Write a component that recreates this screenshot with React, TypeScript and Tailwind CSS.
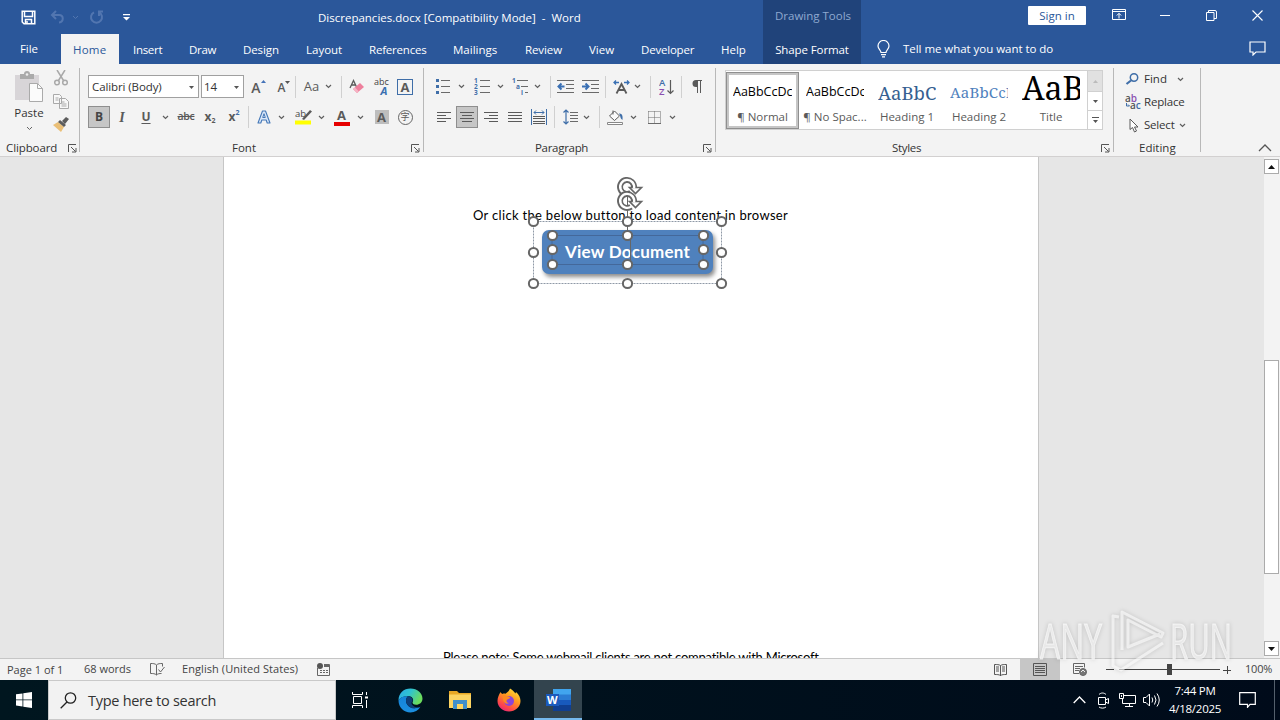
import type { ReactNode } from 'react';

interface BoxProps {
  className: string;
  children?: ReactNode;
}

const tabs = [
  { name: 'File', cell: 'w-[61px] pl-[20px] pb-[2px]', text: 'tracking-[-0.1px]' },
  { name: 'Home', cell: 'w-[58px] pl-[12px] bg-[#f3f3f3] text-[#2b579a]', text: 'tracking-[0.2px]' },
  { name: 'Insert', cell: 'w-[56px] pl-[14px]', text: 'tracking-[-0.3px]' },
  { name: 'Draw', cell: 'w-[54px] pl-[14px]', text: 'tracking-[-0.3px]' },
  { name: 'Design', cell: 'w-[64px] pl-[14px]', text: 'tracking-[-0.1px]' },
  { name: 'Layout', cell: 'w-[62px] pl-[13px]', text: 'tracking-normal' },
  { name: 'References', cell: 'w-[85px] pl-[14px]', text: 'tracking-[-0.2px]' },
  { name: 'Mailings', cell: 'w-[71px] pl-[13px]', text: 'tracking-normal' },
  { name: 'Review', cell: 'w-[65px] pl-[14px]', text: 'tracking-[-0.1px]' },
  { name: 'View', cell: 'w-[51px] pl-[13px]', text: 'tracking-normal' },
  { name: 'Developer', cell: 'w-[80px] pl-[14px]', text: 'tracking-[-0.2px]' },
  { name: 'Help', cell: 'w-[56px] pl-[14px]', text: 'tracking-normal' },
];

const styles = [
  { name: '¶ Normal', sample: 'AaBbCcDc', look: 'text-[12.5px] text-black' },
  { name: '¶ No Spac...', sample: 'AaBbCcDc', look: 'text-[12.5px] text-black' },
  { name: 'Heading 1', sample: 'AaBbC', look: "font-['Noto_Serif','DejaVu_Serif',serif] text-[18.5px] text-[#365f91]" },
  { name: 'Heading 2', sample: 'AaBbCcI', look: "font-['Noto_Serif','DejaVu_Serif',serif] text-[15px] text-[#4f81bd] tracking-[0.2px]" },
  { name: 'Title', sample: 'AaB', look: "font-['Noto_Serif','DejaVu_Serif',serif] text-[32px] text-black" },
];

function Cell({ className, children }: BoxProps) {
  return <div className={`flex h-full shrink-0 items-center justify-center whitespace-nowrap ${className}`}>{children}</div>;
}

function Chevron({ className }: BoxProps) {
  return (
    <Cell className={className}>
      <svg width="7" height="5" viewBox="0 0 7 5" fill="none" stroke="#5f5f5f" strokeWidth="1.2" className="shrink-0">
        <path d="M1 1l2.5 2.5L6 1" />
      </svg>
    </Cell>
  );
}

function Divider() {
  return <div className="h-[22px] w-px shrink-0 bg-[#d0d0d0]" />;
}

function GroupLabel({ className, children }: BoxProps) {
  return <div className={`flex h-4 shrink-0 items-center whitespace-nowrap text-[11.5px] text-[#333] ${className}`}>{children}</div>;
}

function Launcher() {
  return (
    <svg width="9" height="9" viewBox="0 0 9 9" fill="none" stroke="#555" className="mt-px shrink-0">
      <path d="M.5 8V.5H8M3 3l4.5 4.5M8 4v4H4" />
    </svg>
  );
}

function Lines({ rows }: { rows: [number, number][] }) {
  return (
    <svg width="16" height="16" viewBox="0 0 16 16" stroke="#5a5a5a">
      {rows.map(([from, to], i) => (
        <path key={i} d={`M${from} ${3.5 + i * 3}H${to}`} />
      ))}
    </svg>
  );
}

function Header() {
  return (
    <header className="bg-[#2b579a] text-[11.5px] text-white">
      <div className="flex h-[34px] items-center">
        <Cell className="w-[39px] pl-[18px]">
          <svg width="15" height="15" viewBox="0 0 15 15" fill="none" stroke="white" strokeWidth="1.5">
            <path d="M1.2 1.2h12.6v12.6H3L1.2 12zM3.5 1.5v5h8v-5M4.5 13.5v-4h6v4" />
            <path d="M6 11v3" />
          </svg>
        </Cell>
        <Cell className="w-[36px]">
          <svg width="15" height="14" viewBox="0 0 15 14" fill="none" stroke="#5276b0" strokeWidth="2">
            <path d="M6 1L2 5l4 4M2 5h7c5 0 5 7 0 7.5" />
          </svg>
        </Cell>
        <Cell className="-ml-[6px] w-3">
          <svg width="7" height="5" viewBox="0 0 7 5" fill="none" stroke="#5276b0">
            <path d="M1 1l2.5 2.5L6 1" />
          </svg>
        </Cell>
        <Cell className="w-[30px]">
          <svg width="15" height="15" viewBox="0 0 15 15" fill="none" stroke="#5276b0" strokeWidth="2">
            <path d="M5 2.3a5.5 5.5 0 1 0 5 0M10 6V1.5h4" />
          </svg>
        </Cell>
        <Cell className="w-[30px]">
          <svg width="7" height="7" viewBox="0 0 7 7" fill="white">
            <path d="M0 0h7v1.2H0zM0 3h7L3.5 6.5z" />
          </svg>
        </Cell>
        <div className="flex h-full w-[622px] items-center pl-[177px] pt-px">
          <span className="whitespace-pre">Discrepancies.docx [Compatibility Mode]  -  Word</span>
        </div>
        <div className="flex h-full w-[98px] items-center justify-center bg-[#20437a] pb-[2px] pl-[2px] text-[#8fa9d0]">Drawing Tools</div>
        <div className="mb-[3px] ml-[167px] flex h-[19px] w-[58px] items-center justify-center rounded-[1px] bg-white pt-px text-[#2b579a]">Sign in</div>
        <Cell className="w-[66px] pb-1">
          <svg width="14" height="12" viewBox="0 0 14 12" fill="none" stroke="white">
            <path d="M.5.5h13v10H.5zM.5 2.5h13M7 9.5v-5M4.8 6.5L7 4.3l2.2 2.2" />
          </svg>
        </Cell>
        <Cell className="w-[26px] pb-1">
          <div className="h-px w-[10px] bg-white" />
        </Cell>
        <Cell className="w-[67px] pb-1">
          <svg width="11" height="11" viewBox="0 0 11 11" fill="none" stroke="white">
            <path d="M.5 2.5h7.5v8H.5zM2.5 2.5v-2h6.5q1.5 0 1.5 1.5v6.500H8" />
          </svg>
        </Cell>
        <Cell className="w-[25px] pb-1">
          <svg width="11" height="11" viewBox="0 0 11 11" stroke="white" strokeWidth="1.1">
            <path d="M.5.5l10 10M10.5.5l-10 10" />
          </svg>
        </Cell>
      </div>
      <div className="flex h-[30px] items-center">
        {tabs.map((tab) => (
          <div key={tab.name} className={`flex h-full shrink-0 items-center whitespace-nowrap pt-px ${tab.cell}`}>
            <span className={tab.text}>{tab.name}</span>
          </div>
        ))}
        <div className="flex h-full w-[98px] items-center justify-center whitespace-nowrap bg-[#20437a] pt-px tracking-[-0.1px]">Shape Format</div>
        <Cell className="w-[42px] pl-[3px]">
          <svg width="13" height="18" viewBox="0 0 13 18" fill="none" stroke="white" strokeWidth="1.2">
            <path d="M4 12.500c0-2-3-3.500-3-6.500a5.500 5.500 0 0 1 11 0c0 3-3 4.500-3 6.500zM4 14.700h5M5 16.800h3" />
          </svg>
        </Cell>
        <span className="w-[346px] whitespace-nowrap tracking-[-0.04px]">Tell me what you want to do</span>
        <svg width="17" height="15" viewBox="0 0 17 15" fill="none" stroke="white" strokeWidth="1.2" className="mb-px">
          <path d="M1 1h15v10H7l-3 3v-3H1z" />
        </svg>
      </div>
    </header>
  );
}

function ClipboardGroup() {
  return (
    <div className="mt-1 flex h-[84px] w-[80px] flex-col border-r border-[#b8b8b8]">
      <div className="flex h-[72px] shrink-0">
        <div className="flex w-[49px] flex-col items-center pl-[9px] pt-[3px] text-[11.5px] text-[#333]">
          <svg width="30" height="32" viewBox="0 0 30 32" className="shrink-0">
            <path d="M1 4h24v25H1z" fill="#d8d5d8" />
            <path d="M6 3h4a3 3 0 0 1 6 0h4v5H6z" fill="#aaa" />
            <circle cx="13" cy="3.5" r="1.3" fill="#eee" />
            <path d="M15.500 12.500h8l5 5v13h-13z" fill="#fbfbfb" stroke="#aaa" />
            <path d="M23.500 12.500v5h5" fill="none" stroke="#aaa" />
          </svg>
          <span className="mt-[2px] leading-[16px]">Paste</span>
          <svg width="7" height="5" viewBox="0 0 7 5" fill="none" stroke="#666" className="mt-[5px] shrink-0">
            <path d="M1 1l2.5 2.5L6 1" />
          </svg>
        </div>
        <div className="flex w-6 flex-col items-center pt-[2px]">
          <svg width="16" height="16" viewBox="0 0 16 16" fill="none" stroke="#a9a9a9" strokeWidth="1.5" className="shrink-0">
            <path d="M4 0l6.500 10.500M12 0L5.500 10.500" />
            <circle cx="4" cy="12.5" r="2.3" />
            <circle cx="12" cy="12.5" r="2.3" />
          </svg>
          <svg width="16" height="15" viewBox="0 0 16 15" fill="#f8f8f8" stroke="#a9a9a9" className="mt-[8px] shrink-0">
            <path d="M.5.5h6l2 2v7h-8zM6.500 4.500h6l3 3v7h-9z" />
            <path d="M2.500 4h3M2.500 6h3M8.500 8h3M8.500 10h5M8.500 12h5" />
          </svg>
          <svg width="16" height="15" viewBox="0 0 16 15" className="mt-[8px] shrink-0">
            <path d="M0 8l5-3 6 5-3 5z" fill="#eabf77" />
            <path d="M5 5l2-2 6 5-2 2zM9 4l4-4 3 2-4 5z" fill="#5c5c5c" />
          </svg>
        </div>
      </div>
      <GroupLabel className="justify-between pl-[6px] pr-[2px]">
        <span className="tracking-[-0.1px]">Clipboard</span>
        <Launcher />
      </GroupLabel>
    </div>
  );
}

function FontGroup() {
  return (
    <div className="mt-1 flex h-[84px] w-[344px] flex-col border-r border-[#b8b8b8] text-[#5a5a5a]">
      <div className="mt-[7px] flex h-[23px] shrink-0 items-center pl-2">
        <div className="flex h-full w-[111px] items-center justify-between border border-[#a0a0a0] bg-white pl-[3px] pr-1 pt-px text-[11.5px] text-[#333]">
          <span className="tracking-[-0.1px]">Calibri (Body)</span>
          <svg width="5" height="3" viewBox="0 0 5 3" fill="#555"><path d="M0 0h5L2.5 3z" /></svg>
        </div>
        <div className="ml-[2px] flex h-full w-[43px] items-center justify-between border border-[#a0a0a0] bg-white pl-[2px] pr-1 pt-px text-[11.5px] text-[#333]">
          <span>14</span>
          <svg width="5" height="3" viewBox="0 0 5 3" fill="#555"><path d="M0 0h5L2.5 3z" /></svg>
        </div>
        <Cell className="w-[29px] pt-px text-[14px] font-semibold">
          A<svg width="5" height="3" viewBox="0 0 5 3" fill="#4472b8" className="mb-[11px]"><path d="M0 3h5L2.5 0z" /></svg>
        </Cell>
        <Cell className="w-[22px] pt-[3px] text-[12px] font-semibold">
          A<svg width="5" height="3" viewBox="0 0 5 3" fill="#555" className="mb-[12px]"><path d="M0 0h5L2.5 3z" /></svg>
        </Cell>
        <Divider />
        <Cell className="w-[29px] pl-[2px] text-[13px]">Aa</Cell>
        <Chevron className="w-[6px]" />
        <div className="w-[10px]" />
        <Divider />
        <Cell className="w-[29px]">
          <svg width="15" height="15" viewBox="0 0 15 15">
            <path d="M1 9L4.5 1.5 8 9M2.3 6h4.5" fill="none" stroke="#5a5a5a" strokeWidth="1.3" />
            <path d="M4 10l7-6 4 4-7 6z" fill="#ee7f9c" />
            <path d="M4 10l2-1.5 4 4L8 14z" fill="#f6b3c4" />
          </svg>
        </Cell>
        <Cell className="w-[21px] flex-col">
          <span className="h-[7px] text-[9px] leading-[6px] text-[#444]">abc</span>
          <span className="h-[9px] pl-[5px] text-[11px] font-bold italic leading-[9px] text-[#3a6fb0]">A</span>
        </Cell>
        <Cell className="w-[26px]">
          <span className="h-4 w-4 border border-[#3f6ea8] text-center text-[13px] font-bold leading-[14px]">A</span>
        </Cell>
      </div>
      <div className="mt-2 flex h-[22px] shrink-0 items-center pl-2">
        <Cell className="w-[22px] border border-[#8e8e8e] bg-[#c6c6c6] text-[12px] font-bold text-[#444]">B</Cell>
        <Cell className="w-6 font-['Liberation_Serif',serif] text-[14px] font-bold italic">I</Cell>
        <Cell className="w-6 text-[12px] font-bold underline underline-offset-2">U</Cell>
        <Chevron className="w-[14px]" />
        <Cell className="w-[28px] text-[10.5px] font-semibold tracking-[-0.3px] line-through">abc</Cell>
        <Cell className="w-[20px] text-[12px] font-bold">x<span className="pt-2 text-[7px]">2</span></Cell>
        <Cell className="w-[28px] text-[12px] font-bold">x<span className="pb-2 text-[7px] text-[#3f6ea8]">2</span></Cell>
        <Divider />
        <Cell className="w-[30px]">
          <svg width="14" height="14" viewBox="0 0 14 14" fill="none" stroke="#4478b8" strokeLinejoin="round">
            <path d="M1 13L5.5 1h3L13 13h-2.8l-1-3H4.8l-1 3z" strokeWidth="1.1" fill="#dce8f8" />
            <path d="M5.7 7.5h2.6L7 3.7z" fill="#f3f3f3" />
          </svg>
        </Cell>
        <Chevron className="w-[4px]" />
        <Cell className="w-[36px] pl-1">
          <svg width="17" height="16" viewBox="0 0 17 16">
            <text x="0" y="8" fontSize="9.5" fontFamily="Open Sans, sans-serif" fill="#444">ab</text>
            <path d="M7 10l8-9 2 1.5-8 8.5z" fill="#5a5a5a" />
            <path d="M0 11.500h16v4H0z" fill="#ffff00" />
          </svg>
        </Cell>
        <Chevron className="w-[4px]" />
        <Cell className="w-[35px] flex-col pl-[2px]">
          <span className="text-[13px] font-bold leading-[13px]">A</span>
          <span className="h-1 w-4 bg-[#e60000]" />
        </Cell>
        <Chevron className="w-[4px]" />
        <Cell className="ml-[4px] w-[31px]">
          <span className="h-[14px] w-[14px] bg-[#bdbdbd] text-center text-[13px] font-bold leading-[14px]">A</span>
        </Cell>
        <Cell className="w-4">
          <span className="flex h-[15px] w-[15px] shrink-0 items-center justify-center rounded-full border border-[#666] font-['Noto_Sans_CJK_SC',sans-serif] text-[9px]">字</span>
        </Cell>
      </div>
      <GroupLabel className="mt-3 justify-between pl-[152px] pr-[3px]">
        <span>Font</span>
        <Launcher />
      </GroupLabel>
    </div>
  );
}

function ParagraphGroup() {
  return (
    <div className="mt-1 flex h-[84px] w-[292px] flex-col border-r border-[#b8b8b8] text-[#5a5a5a]">
      <div className="mt-[7px] flex h-[23px] shrink-0 items-center pl-[10px]">
        <Cell className="w-[18px]">
          <svg width="14" height="15" viewBox="0 0 14 15">
            <path d="M0 0h3v3H0zM0 6h3v3H0zM0 12h3v3H0z" fill="#3f6ea8" />
            <path d="M5 1.500h9M5 7.500h9M5 13.500h9" stroke="#6a6a6a" />
          </svg>
        </Cell>
        <Chevron className="w-[18px]" />
        <Cell className="w-[23px]">
          <svg width="16" height="17" viewBox="0 0 16 17">
            <g fontSize="6.5" fontWeight="700" fontFamily="Open Sans, sans-serif" fill="#3f6ea8">
              <text x="0" y="5">1</text>
              <text x="0" y="11">2</text>
              <text x="0" y="17">3</text>
            </g>
            <path d="M6 2.500h10M6 8.500h10M6 14.500h10" stroke="#6a6a6a" />
          </svg>
        </Cell>
        <Chevron className="w-[15px]" />
        <Cell className="w-[25px]">
          <svg width="17" height="17" viewBox="0 0 17 17">
            <g fontSize="6.5" fontWeight="700" fontFamily="Open Sans, sans-serif" fill="#3f6ea8">
              <text x="0" y="5">1</text>
              <text x="4" y="11">a</text>
              <text x="9" y="17">i</text>
            </g>
            <path d="M5 2.500h11M9 8.500h7M13 14.500h3" stroke="#6a6a6a" />
          </svg>
        </Cell>
        <Chevron className="w-[8px]" />
        <div className="w-[9px]" />
        <Divider />
        <Cell className="w-[29px]">
          <svg width="17" height="14" viewBox="0 0 17 14">
            <path d="M0 .5h17M9 4.500h8M9 8.500h8M0 12.500h17" stroke="#6a6a6a" />
            <path d="M7.500 6.500H2M4.500 3.500l-3 3 3 3" stroke="#3a70b4" strokeWidth="2" fill="none" />
          </svg>
        </Cell>
        <Cell className="w-[20px]">
          <svg width="17" height="14" viewBox="0 0 17 14">
            <path d="M0 .5h17M9 4.500h8M9 8.500h8M0 12.500h17" stroke="#6a6a6a" />
            <path d="M0 6.500h5.500M3.500 3.500l3 3-3 3" stroke="#3a70b4" strokeWidth="2" fill="none" />
          </svg>
        </Cell>
        <div className="w-[5px]" />
        <Divider />
        <Cell className="w-[30px]">
          <svg width="17" height="14" viewBox="0 0 17 14" fill="none">
            <path d="M6 2.500H1M3 .5l-2 2 2 2M11 2.500h5M14 .5l2 2-2 2" stroke="#3a70b4" strokeWidth="1.3" />
            <path d="M3.500 13.500L8.500 4l5 9.500M5.500 10h6" stroke="#5a5a5a" strokeWidth="1.8" />
          </svg>
        </Cell>
        <Chevron className="w-[3px]" />
        <div className="w-[11px]" />
        <Divider />
        <Cell className="w-[30px]">
          <svg width="15" height="16" viewBox="0 0 15 16">
            <g fontSize="9.5" fontWeight="600" fontFamily="Open Sans, sans-serif">
              <text x="0" y="7" fill="#3f6ea8">A</text>
              <text x="0" y="16" fill="#8a4fb0">Z</text>
            </g>
            <path d="M11.500 1v13M8.500 11.500l3 3 3-3" stroke="#5a5a5a" strokeWidth="1.2" fill="none" />
          </svg>
        </Cell>
        <Divider />
        <Cell className="w-[30px]">
          <svg width="10" height="13" viewBox="0 0 10 13" fill="#5a5a5a">
            <path d="M4 0h6v1H9v12H8V1H6v12H5V7H4a3.500 3.500 0 0 1 0-7z" />
          </svg>
        </Cell>
      </div>
      <div className="mt-2 flex h-[22px] shrink-0 items-center pl-[7px]">
        <Cell className="w-[25px]"><Lines rows={[[1, 15], [1, 10], [1, 15], [1, 10]]} /></Cell>
        <Cell className="w-[22px] border border-[#8e8e8e] bg-[#c6c6c6]"><Lines rows={[[1, 15], [3, 13], [1, 15], [3, 13]]} /></Cell>
        <Cell className="w-[26px]"><Lines rows={[[1, 15], [6, 15], [1, 15], [6, 15]]} /></Cell>
        <Cell className="w-[22px]"><Lines rows={[[1, 15], [1, 15], [1, 15], [1, 15]]} /></Cell>
        <Cell className="w-[26px]">
          <svg width="16" height="16" viewBox="0 0 16 16" fill="none">
            <path d="M.5 0v16M15.500 0v16M3 3.500h10M5 1.500l-2 2 2 2M11 1.500l2 2-2 2" stroke="#3f6ea8" />
            <path d="M2 7.500h12M2 9.500h12M2 12.500h12M2 14.500h12" stroke="#5a5a5a" />
          </svg>
        </Cell>
        <div className="w-[2px]" />
        <Divider />
        <Cell className="w-[30px]">
          <svg width="15" height="16" viewBox="0 0 15 16" fill="none">
            <path d="M3 1v14M.5 3.500L3 1l2.500 2.500M.5 12.500L3 15l2.500-2.500" stroke="#3f6ea8" strokeWidth="1.2" />
            <path d="M7 3.500h8M7 6.500h8M7 9.500h8M7 12.500h8" stroke="#6a6a6a" />
          </svg>
        </Cell>
        <Chevron className="w-[3px]" />
        <div className="w-[11px]" />
        <Divider />
        <Cell className="w-[31px]">
          <svg width="17" height="16" viewBox="0 0 17 16" fill="none">
            <path d="M6 1.500v4M2.500 7l5-5 5 5-5 4.500z" stroke="#5a5a5a" fill="#fafafa" />
            <path d="M12 4.500c3 0 4 2 3.500 6.500-2-1-2-3-2.500-4.500z" fill="#3f6ea8" />
            <path d="M.5 13.500h15v2H.5z" stroke="#888" fill="white" />
          </svg>
        </Cell>
        <Chevron className="w-[4px]" />
        <Cell className="ml-[3px] w-[32px]">
          <svg width="13" height="13" viewBox="0 0 13 13" fill="none" stroke="#6a6a6a">
            <path d="M.5.5h12M.5 6.500h12M.5.5v12M6.500.5v12M12.500.5v12" strokeDasharray="1 1" />
            <path d="M0 12.500h13" />
          </svg>
        </Cell>
        <Chevron className="w-[4px]" />
      </div>
      <GroupLabel className="mt-3 justify-between pl-[111px] pr-[3px]">
        <span className="tracking-[-0.3px]">Paragraph</span>
        <Launcher />
      </GroupLabel>
    </div>
  );
}

function StylesGroup() {
  return (
    <div className="mt-1 flex h-[84px] w-[398px] flex-col border-r border-[#b8b8b8]">
      <div className="ml-[9px] mt-[2px] flex h-[60px] w-[378px] shrink-0 border border-[#d0d0d0] bg-white">
        {styles.map((style, i) => (
          <div
            key={style.name}
            className={`flex h-[57px] shrink-0 flex-col overflow-hidden ${i === 0 ? 'mt-px w-[73px] border border-[#8f8f8f] ring-2 ring-inset ring-[#c6c6c6]' : 'w-[72px] px-px pt-[2px]'}`}
          >
            <div className={`mx-[6px] flex h-[30px] shrink-0 items-center overflow-hidden whitespace-nowrap ${i === 4 ? 'pt-0' : 'pt-[9px]'} ${style.look}`}>
              <span>{style.sample}</span>
            </div>
            <div className="mt-[5px] whitespace-nowrap text-center text-[11.5px] leading-[18px] text-[#5a5a5a]">{style.name}</div>
          </div>
        ))}
        <div className="flex w-[15px] flex-col border-l border-[#d0d0d0]">
          <div className="flex h-5 items-center justify-center bg-[#e1e1e1]">
            <svg width="5" height="3" viewBox="0 0 5 3" fill="#bbb"><path d="M0 3h5L2.5 0z" /></svg>
          </div>
          <div className="flex h-[20px] items-center justify-center border-y border-[#d0d0d0]">
            <svg width="5" height="3" viewBox="0 0 5 3" fill="#555"><path d="M0 0h5L2.5 3z" /></svg>
          </div>
          <div className="flex h-[18px] items-center justify-center">
            <svg width="7" height="6" viewBox="0 0 7 6" fill="#555"><path d="M0 0h7v1H0zM1 3h5L3.5 6z" /></svg>
          </div>
        </div>
      </div>
      <GroupLabel className="mt-[10px] justify-between pl-[176px] pr-[3px]">
        <span className="tracking-[-0.3px]">Styles</span>
        <Launcher />
      </GroupLabel>
    </div>
  );
}

function EditingGroup() {
  return (
    <div className="mt-1 flex h-[84px] w-[87px] flex-col border-r border-[#b8b8b8] pl-[10px] text-[11.5px] text-[#333]">
      <div className="flex h-[22px] shrink-0 items-center">
        <Cell className="w-[20px] justify-start pl-px">
          <svg width="14" height="12" viewBox="0 0 14 12" fill="none" stroke="#3f6ea8">
            <circle cx="9" cy="4.5" r="3.7" strokeWidth="1.5" />
            <path d="M6 7.500L1.500 11" strokeWidth="2.2" />
          </svg>
        </Cell>
        <span className="w-[33px]">Find</span>
        <Chevron className="w-[7px]" />
      </div>
      <div className="flex h-[24px] shrink-0 items-center">
        <Cell className="w-[20px] justify-start pl-px">
          <svg width="18" height="16" viewBox="0 0 18 16" fontSize="10" fontWeight="600" fontFamily="Open Sans, sans-serif">
            <text x="0" y="7.5" fill="#555">a<tspan fill="#8a4fb0">b</tspan></text>
            <text x="5" y="15" fill="#555">a<tspan fill="#3f6ea8">c</tspan></text>
            <path d="M1.500 9v3h3M3 10.500L4.500 12" stroke="#3f6ea8" fill="none" />
          </svg>
        </Cell>
        <span className="tracking-[-0.2px]">Replace</span>
      </div>
      <div className="flex h-[22px] shrink-0 items-center">
        <Cell className="w-[20px] justify-start pl-[5px]">
          <svg width="10" height="15" viewBox="0 0 10 15" fill="white" stroke="#5a5a5a">
            <path d="M1 1v10.500l2.500-2 2 4.500 2-1-2-4H9z" />
          </svg>
        </Cell>
        <span className="w-[35px] tracking-[-0.2px]">Select</span>
        <Chevron className="w-[7px]" />
      </div>
      <GroupLabel className="mt-1 pl-[15px]">Editing</GroupLabel>
    </div>
  );
}

function Ribbon() {
  return (
    <div className="flex h-[93px] border-b border-[#d2d0d0] bg-[#f3f3f3]">
      <ClipboardGroup />
      <FontGroup />
      <ParagraphGroup />
      <StylesGroup />
      <EditingGroup />
      <svg width="14" height="8" viewBox="0 0 14 8" fill="none" stroke="#555" strokeWidth="1.3" className="ml-[57px] mt-[80px]">
        <path d="M1 7l6-6 6 6" />
      </svg>
    </div>
  );
}

const handles = [
  [533, 221], [627, 221], [721, 221], [533, 252], [721, 252], [533, 283], [627, 283], [721, 283],
  [552, 235], [627, 235], [703, 235], [552, 249], [703, 249], [552, 264], [627, 264], [703, 264],
];

function RotateHandle({ y }: { y: number }) {
  return (
    <g transform={`translate(627 ${y})`} fill="none">
      <path d="M4 5.7A7 7 0 1 1 7 .5" stroke="#666" strokeWidth="6" />
      <path d="M2.500 .5h12L8.500 6.500z" fill="white" stroke="#666" strokeWidth="1.6" />
      <path d="M4.500 5.400A7 7 0 1 1 7 1.500" stroke="white" strokeWidth="2.4" />
    </g>
  );
}

// Selection frame of the grouped shape, drawn over the page
function Selection() {
  return (
    <svg width="230" height="130" viewBox="520 170 230 130" className="pointer-events-none absolute left-[296px] top-[13px]">
      <path d="M533.500 221.500h188v62h-188z" fill="none" stroke="#8f99a6" strokeDasharray="2 1" />
      <path d="M552 235.500h151v29H552z" fill="none" stroke="#44689a" />
      <path d="M627.500 195v40M630.500 238v26" stroke="#666" />
      {handles.map(([x, y]) => (
        <circle key={`${x}-${y}`} cx={x + 0.5} cy={y + 0.5} r="4.6" fill="white" stroke="#666" strokeWidth="2" />
      ))}
      <RotateHandle y={187} />
      <RotateHandle y={201} />
    </svg>
  );
}

function ScrollBar() {
  return (
    <div className="flex w-4 flex-col bg-[#f3f3f3] pt-[2px]">
      <div className="flex h-[15px] w-[15px] shrink-0 items-center justify-center border border-[#ababab] bg-white">
        <svg width="7" height="4" viewBox="0 0 7 4" fill="#111"><path d="M0 4h7L3.5 0z" /></svg>
      </div>
      <div className="mt-[186px] h-[214px] w-[15px] shrink-0 border border-[#ababab] bg-white" />
      <div className="mt-[67px] flex h-[15px] w-[15px] shrink-0 items-center justify-center border border-[#ababab] bg-white">
        <svg width="7" height="4" viewBox="0 0 7 4" fill="#111"><path d="M0 0h7L3.5 4z" /></svg>
      </div>
    </div>
  );
}

function DocumentArea() {
  return (
    <main className="flex h-[501px] bg-[#e6e6e6]">
      <div className="relative ml-[223px] mr-[225px] flex w-[816px] shrink-0 flex-col overflow-hidden border-x border-[#c6c6c6] bg-white font-['Lato','Carlito',sans-serif] text-black">
        <p className="mt-[49px] shrink-0 whitespace-nowrap pl-[249px] text-[13px] leading-[18px] tracking-[0.32px]">
          Or click the below button to load content in browser
        </p>
        <div className="ml-[318px] mt-[6px] flex h-[44px] w-[171px] shrink-0 items-center justify-center whitespace-nowrap rounded-[7px] bg-[#4f81bd] text-[17px] font-bold tracking-[0.25px] text-white shadow-[2px_3px_4px_rgba(0,0,0,0.45)]">
          View Document
        </div>
        <p className="mt-[374px] shrink-0 whitespace-nowrap pl-[219px] text-[13px] leading-[18px] tracking-[-0.24px]">
          Please note: Some webmail clients are not compatible with Microsoft
        </p>
        <Selection />
      </div>
      <ScrollBar />
    </main>
  );
}

function StatusBar() {
  return (
    <div className="flex h-[22px] items-center border-t border-[#c6c6c6] bg-[#f3f3f3] text-[11px] text-[#444]">
      <span className="w-[84px] pl-[7px] pt-px">Page 1 of 1</span>
      <span className="w-[66px]">68 words</span>
      <svg width="15" height="13" viewBox="0 0 15 13" fill="none" stroke="#666">
        <path d="M6.500 12V2C5 .5 3 .5.5.5v10c2.500 0 4.500 0 6 1.500 1.500-1.500 3-1.500 5-1.500M6.500 2C8 .5 10 .5 12.500.5v3M8.500 6.500l2 2.500 4-5" />
      </svg>
      <span className="ml-[17px] w-[135px] whitespace-nowrap tracking-[0.08px]">English (United States)</span>
      <svg width="14" height="13" viewBox="0 0 14 13">
        <path d="M.5 5v7.500h12v-11H7" fill="none" stroke="#666" />
        <path d="M7 2h6v2H7zM3 7h2v1H3zM6 7h2v1H6zM9 7h2v1H9zM3 9h2v1H3zM6 9h2v1H6zM9 9h2v1H9z" fill="#666" />
        <circle cx="3" cy="3" r="3" fill="#555" />
      </svg>
      <div className="grow" />
      <Cell className="w-[40px]">
        <svg width="13" height="12" viewBox="0 0 13 12" fill="none" stroke="#555">
          <path d="M6.500 12V1.500C5 .5 3 .5.5.5v10c2.500 0 4.500 0 6 1 1.500-1 3.500-1 6-1V.5c-2.500 0-4.500 0-6 1M2 3h3M2 5h3M2 7h3M8 3h3M8 5h3M8 7h3" />
        </svg>
      </Cell>
      <Cell className="w-10 bg-[#c6c6c6]">
        <svg width="14" height="13" viewBox="0 0 14 13" fill="none" stroke="#555">
          <path d="M.5.5h13v12H.5zM2 3.500h10M2 5.500h10M2 7.500h10M2 9.500h10" />
        </svg>
      </Cell>
      <Cell className="w-[40px]">
        <svg width="14" height="13" viewBox="0 0 14 13" fill="none" stroke="#666">
          <path d="M6 10.500H.5V.5h11v4M2 3.500h8M2 5.500h5M2 7.500h4" />
          <circle cx="10" cy="9" r="3.5" fill="#777" />
          <path d="M8 9l2-2 2 2" stroke="#eee" />
        </svg>
      </Cell>
      <div className="ml-[6px] h-px w-[8px] bg-[#444]" />
      <div className="ml-[5px] flex h-3 w-[101px] items-center">
        <div className="h-px w-[48px] bg-[#444]" />
        <div className="h-[11px] w-[5px] bg-[#444]" />
        <div className="h-px w-[48px] bg-[#444]" />
      </div>
      <svg width="8" height="8" viewBox="0 0 8 8" stroke="#444" className="ml-[3px]"><path d="M0 4.500h8M4.500 0v8" /></svg>
      <span className="ml-[14px] w-[35px] text-[11px] tracking-[-0.2px]">100%</span>
    </div>
  );
}

function Taskbar() {
  return (
    <footer className="flex h-10 items-center bg-gradient-to-r from-[#00161f] to-[#000b1a] text-white">
      <Cell className="w-12">
        <svg width="16" height="16" viewBox="0 0 16 16" fill="white">
          <path d="M0 2.300L6.500 1.400v6.100H0zM7.300 1.300L16 0v7.500H7.300zM0 8.300h6.500v6.200L0 13.600zM7.300 8.300H16V16l-8.700-1.300z" />
        </svg>
      </Cell>
      <div className="flex h-full w-[288px] items-center border border-[#c9c9c9] bg-[#f2f2f2] pl-[11px] text-[#333]">
        <svg width="17" height="17" viewBox="0 0 17 17" fill="none" stroke="#222" strokeWidth="1.3">
          <circle cx="10.5" cy="6" r="5.2" />
          <path d="M7 10L.7 16.300" />
        </svg>
        <span className="ml-[11px] whitespace-nowrap pt-px text-[14.5px] tracking-[-0.28px]">Type here to search</span>
      </div>
      <Cell className="w-[49px]">
        <svg width="17" height="16" viewBox="0 0 17 16" fill="none" stroke="white">
          <path d="M.5 0v2.500h10V0M.5 16v-2.500h10V16M1.500 4.500h8v7h-8zM14.500 0v3M14.500 8v8" />
          <path d="M13 4.500h3v2h-3z" fill="white" stroke="none" />
        </svg>
      </Cell>
      <Cell className="w-[51px]">
        <svg width="25" height="25" viewBox="0 0 24 24">
          <defs>
            <linearGradient id="edgeTop" x1="0" y1="0" x2="1" y2=".4">
              <stop stopColor="#2aa9e8" />
              <stop offset=".5" stopColor="#30c3d0" />
              <stop offset="1" stopColor="#6bdc5d" />
            </linearGradient>
            <linearGradient id="edgeLow" x1="0" y1="0" x2="0" y2="1">
              <stop stopColor="#1583d8" />
              <stop offset="1" stopColor="#1b8fe0" />
            </linearGradient>
          </defs>
          <path d="M.5 12C.5 5 5.500.5 12 .5S23.500 5 23.500 10c0 4-3 6-6 6-2.500 0-4-1-3.500-2.500 1.500-2 0-5-3-5.500C6 7.500 2 9 .5 12z" fill="url(#edgeTop)" />
          <path d="M.5 12C2 9 5.500 7.500 9.500 8c-2 2-2.500 5-.5 8 2.500 3.500 7 4.500 12.500 2C19.500 21.500 16 23.500 12 23.500 5.500 23.500.5 18.500.5 12z" fill="url(#edgeLow)" />
          <path d="M9.500 8C7.500 10 7 13 9 16c2.500 3.500 7 4.500 12 2.300-3 .5-6-.3-7.500-2.300-1-1.500-.5-2.500.5-3.500.5-2-1.500-4.500-4.500-4.500z" fill="#0d3e78" />
        </svg>
      </Cell>
      <Cell className="w-[47px]">
        <svg width="22" height="20" viewBox="0 0 22 20">
          <path d="M0 1h8l2 2h12v4H0z" fill="#e8a825" />
          <path d="M0 4.500h22V18H0z" fill="#fcd462" />
          <path d="M4 10h14v9H4z" fill="#3f8fcc" />
          <path d="M8 14h6v5H8z" fill="#fcd462" />
        </svg>
      </Cell>
      <Cell className="w-[51px]">
        <svg width="24" height="24" viewBox="0 0 24 24">
          <defs>
            <linearGradient id="fox" x1=".8" y1="0" x2=".2" y2="1">
              <stop stopColor="#ffe23a" />
              <stop offset=".4" stopColor="#ff9a1f" />
              <stop offset=".75" stopColor="#ff4a47" />
              <stop offset="1" stopColor="#e5217c" />
            </linearGradient>
          </defs>
          <path d="M3.500 4c.5 1 1 1.500 2 2 1-.5 2-.5 3-.3C10 4.500 12 3.500 13 .5c3 1.500 4 3.500 5.500 5l.5-1.500c3 2.500 4.500 6 4.500 9C23.500 19 18 23.500 12 23.500S.5 19 .5 13C.5 9.500 2 6.500 3.500 4z" fill="url(#fox)" />
          <circle cx="12" cy="13" r="5" fill="#8a45d8" />
          <path d="M5.500 7.500c3-1 4 .5 6 1 1.500.3 2 1 1 2-1.500 1-3 1-3 2.500 0 1 1 2 2.500 2-3 2-6.500-.5-6.500-7.500z" fill="#ff8a20" />
        </svg>
      </Cell>
      <div className="flex h-full w-12 flex-col items-center border-b-2 border-[#76b9ed] bg-[#33444e] pt-[9px]">
        <svg width="25" height="22" viewBox="0 0 25 22">
          <path d="M7 0h18v6H7z" fill="#41a5ee" />
          <path d="M7 5.500h18V11H7z" fill="#2b7cd3" />
          <path d="M7 11h18v5.500H7z" fill="#185abd" />
          <path d="M7 16h18v6H7z" fill="#103f91" />
          <path d="M0 5h13v12H0z" fill="#1b5abd" />
          <text x="1" y="15" fontSize="11" fontWeight="700" fontFamily="Open Sans, sans-serif" fill="white">W</text>
        </svg>
      </div>
      <div className="grow" />
      <svg width="13" height="8" viewBox="0 0 13 8" fill="none" stroke="white" strokeWidth="1.3"><path d="M.7 7l5.800-6 5.800 6" /></svg>
      <svg width="13" height="17" viewBox="0 0 13 17" fill="none" stroke="white" className="ml-[11px]">
        <path d="M1.500 5.500h7v7h-7zM8.500 8l3-1.500v5l-3-1.500M2 2.500c2-2 5-2 7 0M2 15c2 1.500 5 1.500 7 0" />
      </svg>
      <svg width="17" height="15" viewBox="0 0 17 15" fill="none" stroke="white" className="ml-[9px]">
        <path d="M5 2.500h11.500v8H3.500V6M.5.5h4v5h-4zM2.500 2v2M10.500 10.500v3M6 13.500h8" />
      </svg>
      <svg width="17" height="14" viewBox="0 0 17 14" fill="none" stroke="white" className="ml-[7px]">
        <path d="M.5 4.500H3l3.500-3.500v12L3 9.500H.5zM9 4.500q1.500 2.500 0 5M11.500 2.500q3 4.500 0 9M14 .5q4.500 6.500 0 13" />
      </svg>
      <div className="ml-[4px] flex w-[62px] flex-col items-center whitespace-nowrap text-[11.5px] leading-[18px] tracking-[-0.25px]">
        <span>7:44 PM</span>
        <span>4/18/2025</span>
      </div>
      <svg width="17" height="16" viewBox="0 0 17 16" fill="none" stroke="white" strokeWidth="1.2" className="ml-[13px]">
        <path d="M.7.7h15.600v11.600H11l-2.500 3v-3H.7z" />
      </svg>
      <div className="ml-[18px] h-full w-[6px] border-l border-[#54606c]" />
    </footer>
  );
}

// Translucent recorder logo in the corner
function Watermark() {
  return (
    <svg
      width="204"
      height="70"
      viewBox="1034 604 204 70"
      fill="none"
      stroke="white"
      strokeOpacity="0.6"
      className="pointer-events-none absolute left-[1034px] top-[604px] drop-shadow-[0_0_2px_rgba(0,0,0,0.25)]"
    >
      <g fontFamily="Open Sans, sans-serif" fontSize="50" fill="white" fillOpacity="0.55" strokeWidth="1">
        <text x="1040" y="659" textLength="62" lengthAdjust="spacingAndGlyphs">ANY</text>
        <text x="1170" y="659" textLength="62" lengthAdjust="spacingAndGlyphs">RUN</text>
      </g>
      <g strokeWidth="3" strokeLinejoin="round">
        <path d="M1122 650v-38l41 21-2 4-33-17v27l32-13" />
        <path d="M1119 617l-6-1v50l8 4 42-27" />
      </g>
    </svg>
  );
}

export default function App() {
  return (
    <div className="relative h-[720px] w-[1280px] overflow-hidden font-['Open_Sans','Noto_Sans',sans-serif]">
      <Header />
      <Ribbon />
      <DocumentArea />
      <StatusBar />
      <Taskbar />
      <Watermark />
    </div>
  );
}
